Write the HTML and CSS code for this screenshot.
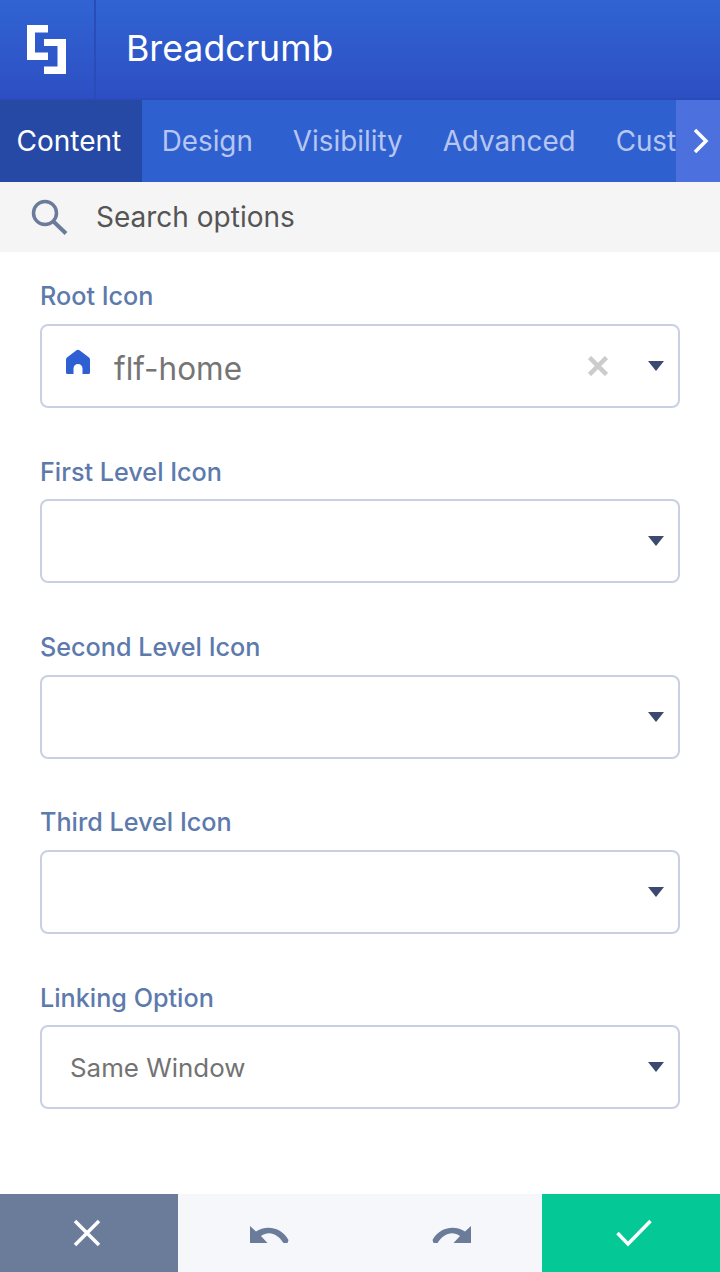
FILE: index.html
```html
<!DOCTYPE html>
<html lang="en">

<head>
    <meta charset="UTF-8">
    <meta name="viewport" content="width=device-width, initial-scale=1.0">
    <title>Breadcrumb</title>
    <link rel="stylesheet" href="styles.css">
</head>

<body>
    <div class="panel">
        <header class="topbar">
            <div class="logo">
                <svg width="39" height="49" viewBox="0 0 39 49">
                    <path fill="#fff" d="M0 0H21V7.500H8V27.500H21V35H0Z" />
                    <path fill="#fff" d="M17 14H39V49H17V41.500H30.500V21H17Z" />
                </svg>
            </div>
            <h1 class="title">Breadcrumb</h1>
        </header>

        <nav class="tabs">
            <div class="tab active">Content</div>
            <div class="tab">Design</div>
            <div class="tab">Visibility</div>
            <div class="tab">Advanced</div>
            <div class="tab">Custom</div>
            <div class="tab-next">
                <svg width="16" height="26" viewBox="0 0 16 26">
                    <path fill="none" stroke="#fff" stroke-width="3.500" d="M2 2L13 13L2 24" />
                </svg>
            </div>
        </nav>

        <div class="search">
            <svg width="38" height="36" viewBox="0 0 38 36">
                <circle cx="14" cy="14" r="11.500" fill="none" stroke="#6b7c9b" stroke-width="3.500" />
                <path stroke="#6b7c9b" stroke-width="4" d="M22.500 22.500L35 34.500" />
            </svg>
            <span>Search options</span>
        </div>

        <main class="form">
            <div class="field">
                <label>Root Icon</label>
                <div class="select">
                    <svg class="home" width="26" height="26" viewBox="0 0 26 26">
                        <path fill="#2e5fd3" d="M11.500 1.200A2.500 2.500 0 0 1 14.500 1.200L24 8.500A2.500 2.500 0 0 1 25 10.500V23.500A1.500 1.500 0 0 1 23.500 25H17.500V19.500A4.500 4.500 0 0 0 8.500 19.500V25H2.500A1.500 1.500 0 0 1 1 23.500V10.500A2.500 2.500 0 0 1 2 8.500Z" />
                    </svg>
                    <span class="value icon-value">flf-home</span>
                    <svg class="clear" width="20" height="20" viewBox="0 0 20 20">
                        <path stroke="#ccc" stroke-width="4.500" d="M1.500 1.500L18.500 18.500M18.500 1.500L1.500 18.500" />
                    </svg>
                    <i class="caret"></i>
                </div>
            </div>
            <div class="field">
                <label>First Level Icon</label>
                <div class="select"><i class="caret"></i></div>
            </div>
            <div class="field">
                <label>Second Level Icon</label>
                <div class="select"><i class="caret"></i></div>
            </div>
            <div class="field">
                <label>Third Level Icon</label>
                <div class="select"><i class="caret"></i></div>
            </div>
            <div class="field">
                <label>Linking Option</label>
                <div class="select">
                    <span class="value">Same Window</span>
                    <i class="caret"></i>
                </div>
            </div>
        </main>

        <footer class="actions">
            <div class="btn cancel">
                <svg width="30" height="30" viewBox="0 0 30 30">
                    <path stroke="#fff" stroke-width="3.500" d="M3 3L27 27M27 3L3 27" />
                </svg>
            </div>
            <div class="btn history">
                <svg width="39" height="18" viewBox="0 0 39 18">
                    <path fill="#6b7c9b" d="M0 0L6 5.500C14 0 30 -1 38.500 14L37.500 17H33.500C28 8 19 4 11 10L17.500 17H0Z" />
                </svg>
            </div>
            <div class="btn history">
                <svg width="39" height="18" viewBox="0 0 39 18">
                    <path fill="#6b7c9b" d="M39 0L33 5.500C25 0 9 -1 0.500 14L1.500 17H5.500C11 8 20 4 28 10L21.500 17H39Z" />
                </svg>
            </div>
            <div class="btn save">
                <svg width="36" height="28" viewBox="0 0 36 28">
                    <path fill="none" stroke="#fff" stroke-width="3.500" d="M1.500 14L12 25L34.500 2" />
                </svg>
            </div>
        </footer>
    </div>
</body>

</html>
```

FILE: styles.css
```css
* {
    box-sizing: border-box;
}

body {
    margin: 0;
    background-color: white;
    font-family: Inter, "Liberation Sans", sans-serif;
}

.panel {
    display: flex;
    flex-direction: column;
    width: 720px;
    height: 1272px;
    overflow: hidden;
}

.topbar {
    display: flex;
    align-items: center;
    height: 99px;
    background: linear-gradient(#3064d2, #2e4fc4);
    border-bottom: 1px solid #2a4cba;
}

.logo {
    display: flex;
    align-items: center;
    justify-content: center;
    width: 96px;
    height: 98px;
    padding-right: 1px;
    border-right: 2px solid #2a4cba;
}

.title {
    margin: 0 0 2px 30px;
    font-size: 35.700px;
    font-weight: 400;
    color: white;
}

.tabs {
    display: flex;
    position: relative;
    height: 83px;
    overflow: hidden;
    background-color: #2f60d0;
    border-top: 1px solid #2a4cba;
}

.tab {
    display: flex;
    align-items: center;
    flex-shrink: 0;
    padding: 0 20px;
    font-size: 27.800px;
    color: #b6c6f0;
}

.tab.active {
    margin-top: -1px;
    padding: 0 20.500px 0 16.500px;
    font-size: 28px;
    color: white;
    background-color: #2749a6;
}

.tab-next {
    position: absolute;
    top: 0;
    right: 0;
    display: flex;
    align-items: center;
    justify-content: center;
    width: 44px;
    height: 100%;
    padding-left: 5px;
    background-color: #4c71df;
}

.search {
    display: flex;
    align-items: center;
    gap: 27px;
    height: 70px;
    padding-left: 31px;
    font-size: 28px;
    color: #555;
    background-color: #f5f5f5;
}

.form {
    display: flex;
    flex-direction: column;
    gap: 47.900px;
    flex: 1;
    padding: 28.300px 40px 0;
}

.field label {
    display: block;
    margin-bottom: 11.500px;
    font-size: 25.200px;
    line-height: 32px;
    font-weight: 500;
    color: #5d7aac;
}

.select {
    display: flex;
    align-items: center;
    position: relative;
    height: 84px;
    padding: 0 28px;
    border: 2px solid #c9d0e3;
    border-radius: 8px;
}

.value {
    font-size: 25.900px;
    color: #737373;
}

.icon-value {
    margin: 5px 0 0 23px;
    font-size: 31.500px;
    color: #757575;
}

.home {
    margin-left: -5px;
    margin-top: -8px;
}

.clear {
    position: absolute;
    top: 30px;
    right: 70px;
}

.caret {
    position: absolute;
    top: 35px;
    right: 14px;
    width: 0;
    height: 0;
    border-top: 10px solid #3c4a70;
    border-left: 8px solid transparent;
    border-right: 8px solid transparent;
}

.actions {
    display: grid;
    grid-template-columns: 178px 182px 182px 178px;
    height: 78px;
    background-color: #f5f7fb;
}

.btn {
    display: flex;
    align-items: center;
    justify-content: center;
}

.cancel {
    padding-right: 4px;
    background-color: #6b7c9b;
}

.history {
    padding-top: 4px;
}

.save {
    padding-left: 5px;
    background-color: #04c896;
}
```
